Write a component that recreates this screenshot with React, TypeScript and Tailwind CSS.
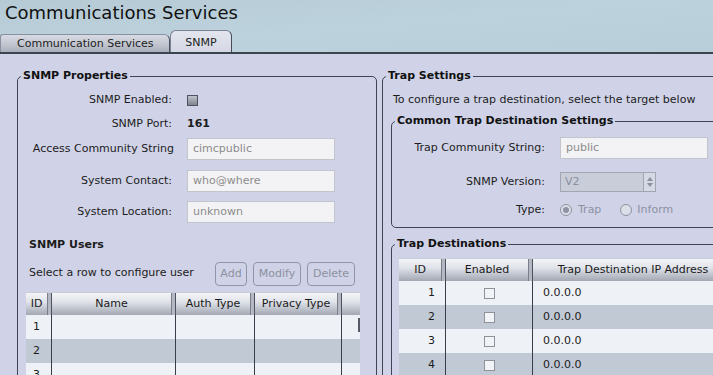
import React from "react";

const headBg =
  "bg-[linear-gradient(180deg,#f4f5f8_0%,#e0e3e9_40%,#a2a7b3_100%)]";

type Col = { w: string; label: string };

const HeadCell = ({ w, label, last }: { w: string; label: string; last?: boolean }) => (
  <div className={`flex h-full shrink-0 ${w} ${headBg}`}>
    <div className="flex flex-1 items-center justify-center whitespace-nowrap text-[#1a1a1a]">
      {label}
    </div>
    {!last && (
      <div className="h-full w-[5px] border-x border-l-[#7a7e8a] border-r-[#4e5260] bg-[#b4b8c2]" />
    )}
  </div>
);

const Field = ({ value, w = "w-[148px]" }: { value: string; w?: string }) => (
  <div
    className={`flex h-[22px] ${w} items-center border border-[#c2c5cc] bg-[#f3f3f5] pl-[5px] text-[#8c8c8c]`}
  >
    {value}
  </div>
);

const Legend = ({ children }: { children: React.ReactNode }) => (
  <legend className="ml-[3px] px-[2px] text-[11px] font-bold leading-[14px] text-[#111]">
    {children}
  </legend>
);

const Box = () => (
  <div className="h-[11px] w-[11px] border border-[#8e929c] bg-[#f2f3f6]" />
);

const userCols: Col[] = [
  { w: "w-[26px]", label: "ID" },
  { w: "w-[124px]", label: "Name" },
  { w: "w-[79px]", label: "Auth Type" },
  { w: "w-[87px]", label: "Privacy Type" },
  { w: "w-[18px]", label: "" },
];

const trapCols: Col[] = [
  { w: "w-[47px]", label: "ID" },
  { w: "w-[87px]", label: "Enabled" },
  { w: "w-[200px]", label: "Trap Destination IP Address" },
];

const rowBg = (i: number) => (i % 2 === 0 ? "bg-[#eef1f6]" : "bg-[#c1c9d5]");

export default function App() {
  return (
    <div className="h-[375px] w-[713px] overflow-hidden bg-[#d0d3e7] font-['DejaVu_Sans',sans-serif] text-[11px] text-[#1c1c1c]">
      {/* title bar */}
      <div className="h-[54px] border-b-2 border-[#3a4550] bg-[linear-gradient(175deg,#b6cad5_0%,#bcd2dc_50%,#b8cfd9_100%)]">
        <div className="h-[30px] pl-[5px] pt-[1px] text-[18px] leading-[24px] text-[#111]">
          Communications Services
        </div>
        <div className="flex h-[22px] items-end">
          <div className="flex h-[18px] w-[170px] items-center rounded-tr-[6px] rounded-tl-[3px] border border-b-0 border-[#8a90a0] border-r-[#4c5262] bg-[linear-gradient(180deg,#d8dbe3_0%,#bfc3cd_60%,#a9aeba_100%)] pl-[16px] pt-[1px] text-[#222]">
            Communication Services
          </div>
          <div className="flex h-[22px] w-[62px] items-start justify-center rounded-t-[6px] border border-b-0 border-[#7c8294] border-r-[#444a5a] bg-[linear-gradient(180deg,#e4e6ee_0%,#d4d7e4_100%)] pt-[4px] text-[#222]">
            SNMP
          </div>
        </div>
      </div>

      <div className="flex gap-[5px] pl-[17px] pt-[15px]">
        {/* left column */}
        <fieldset className="h-[340px] w-[360px] shrink-0 rounded-[5px] border border-[#3e4452]">
          <Legend>SNMP Properties</Legend>
          <div className="mt-[5px] flex h-[24px] items-center gap-[15px]">
            <div className="w-[154px] text-right">SNMP Enabled:</div>
            <div className="h-[11px] w-[11px] border border-[#4f5360] bg-[linear-gradient(180deg,#c0c3cc,#80848f)]" />
          </div>
          <div className="flex h-[24px] items-center gap-[15px]">
            <div className="w-[154px] text-right">SNMP Port:</div>
            <div className="font-bold">161</div>
          </div>
          <div className="mt-[2px] flex items-center gap-[13px]">
            <div className="w-[156px] text-right">Access Community String</div>
            <Field value="cimcpublic" />
          </div>
          <div className="mt-[10px] flex items-center gap-[15px]">
            <div className="w-[154px] text-right">System Contact:</div>
            <Field value="who@where" />
          </div>
          <div className="mt-[9px] flex items-center gap-[15px]">
            <div className="w-[154px] text-right">System Location:</div>
            <Field value="unknown" />
          </div>

          <div className="ml-[11px] mt-[15px] font-bold leading-[14px]">SNMP Users</div>

          <div className="ml-[11px] mt-[10px] flex h-[24px] items-start">
            <div className="w-[186px] pt-[3px]">Select a row to configure user</div>
            <div className="flex gap-[6px] text-[#8c90a0]">
              <div className="flex h-[24px] w-[32px] items-center justify-center rounded-[4px] border border-[#9096a6]">
                Add
              </div>
              <div className="flex h-[24px] w-[48px] items-center justify-center rounded-[4px] border border-[#9096a6]">
                Modify
              </div>
              <div className="flex h-[24px] w-[48px] items-center justify-center rounded-[4px] border border-[#9096a6]">
                Delete
              </div>
            </div>
          </div>

          <div className="ml-[8px] mt-[6px] w-[334px]">
            <div className="flex h-[23px] border-t border-[#c8ccd4]">
              {userCols.map((c, i) => (
                <HeadCell key={i} w={c.w} label={c.label} last={i === userCols.length - 1} />
              ))}
            </div>
            {[1, 2, 3].map((n, r) => (
              <div key={n} className={`flex h-[24px] ${rowBg(r)}`}>
                {userCols.map((c, i) => (
                  <div
                    key={i}
                    className={`flex h-full shrink-0 items-center ${c.w} ${
                      i < userCols.length - 1 ? "border-r border-[#3a3e4a]" : "justify-end"
                    } ${i === 0 ? "pl-[7px]" : ""}`}
                  >
                    {i === 0 ? n : ""}
                    {i === userCols.length - 1 && r === 0 && (
                      <div className="mb-[4px] h-[14px] w-[2px] bg-[#555a66]" />
                    )}
                  </div>
                ))}
              </div>
            ))}
          </div>
        </fieldset>

        {/* right column */}
        <fieldset className="h-[340px] w-[360px] shrink-0 rounded-[5px] border border-[#3e4452]">
          <Legend>Trap Settings</Legend>
          <div className="ml-[10px] mt-[9px] h-[16px] whitespace-nowrap leading-[16px]">
            To configure a trap destination, select the target below
          </div>

          <fieldset className="ml-[8px] mt-[6px] w-[340px] rounded-[5px] border border-[#3e4452] pb-[9px]">
            <Legend>Common Trap Destination Settings</Legend>
            <div className="mt-[9px] flex items-center gap-[15px]">
              <div className="w-[153px] text-right">Trap Community String:</div>
              <Field value="public" />
            </div>
            <div className="mt-[13px] flex items-center gap-[15px]">
              <div className="w-[153px] text-right">SNMP Version:</div>
              <div className="flex h-[20px] w-[96px] border border-[#a0a6b4] bg-[#c9cdd9]">
                <div className="flex flex-1 items-center pl-[4px] text-[#8a90a0]">V2</div>
                <div className="flex w-[12px] flex-col items-center justify-center gap-[2px] border-l border-[#a0a6b4] bg-[#d6d9e3]">
                  <svg width="6" height="4" viewBox="0 0 6 4">
                    <path d="M3 0 L6 4 L0 4 Z" fill="#8a90a0" />
                  </svg>
                  <svg width="6" height="4" viewBox="0 0 6 4">
                    <path d="M0 0 L6 0 L3 4 Z" fill="#8a90a0" />
                  </svg>
                </div>
              </div>
            </div>
            <div className="mt-[10px] flex h-[16px] items-center gap-[15px]">
              <div className="w-[153px] text-right">Type:</div>
              <div className="flex items-center text-[#8c91a2]">
                <div className="flex h-[12px] w-[12px] items-center justify-center rounded-full border border-[#8d93a3] bg-[#dcdfe8]">
                  <div className="h-[6px] w-[6px] rounded-full bg-[#8d93a3]" />
                </div>
                <span className="ml-[6px]">Trap</span>
                <div className="ml-[19px] h-[12px] w-[12px] rounded-full border border-[#8d93a3] bg-[#dcdfe8]" />
                <span className="ml-[5px]">Inform</span>
              </div>
            </div>
          </fieldset>

          <fieldset className="ml-[8px] mt-[9px] h-[200px] w-[360px] rounded-[5px] border border-[#3e4452]">
            <Legend>Trap Destinations</Legend>
            <div className="ml-[7px] mt-[7px] w-[334px]">
              <div className="flex h-[23px] border-t border-[#c8ccd4]">
                {trapCols.map((c, i) => (
                  <HeadCell key={i} w={c.w} label={c.label} last={i === trapCols.length - 1} />
                ))}
              </div>
              {[1, 2, 3, 4].map((n, r) => (
                <div key={n} className={`flex h-[24px] ${rowBg(r)}`}>
                  <div className="flex h-full w-[47px] shrink-0 items-center justify-end border-r border-[#3a3e4a] pr-[10px]">
                    {n}
                  </div>
                  <div className="flex h-full w-[87px] shrink-0 items-center justify-center border-r border-[#3a3e4a]">
                    <Box />
                  </div>
                  <div className="flex h-full w-[200px] shrink-0 items-center pl-[10px]">0.0.0.0</div>
                </div>
              ))}
            </div>
          </fieldset>
        </fieldset>
      </div>
    </div>
  );
}
